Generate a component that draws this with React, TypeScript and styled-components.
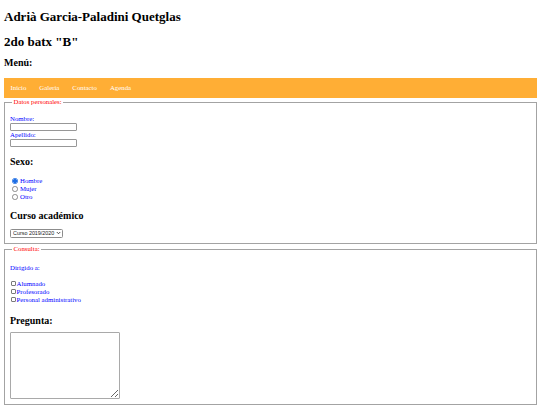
import React from "react";
import styled, { createGlobalStyle } from "styled-components";

const GlobalStyle = createGlobalStyle`
  body {
    margin: 0;
    padding: 0 3px 0 4px;
    font-family: "Liberation Serif", "Times New Roman", serif;
    font-size: 6.8px;
    color: #000;
    background: #fff;
  }
`;

const Title = styled.h1<{ $top: number }>`
  margin: ${(p) => p.$top}px 0 0;
  font-size: 13px;
  line-height: 15px;
  font-weight: bold;
`;

const Heading = styled.h2<{ $top: number }>`
  margin: ${(p) => p.$top}px 0 0;
  font-size: 10px;
  line-height: 12px;
  font-weight: bold;
`;

const NavBar = styled.ul`
  list-style: none;
  margin: 8.7px 0 0;
  padding: 0;
  display: flex;
  background: #ffae35;
`;

const NavLink = styled.a`
  display: block;
  padding: 6px 6.5px;
  line-height: 8px;
  color: #fff;
  text-decoration: none;
`;

const Fieldset = styled.fieldset<{ $top: number; $bottom: number }>`
  margin: ${(p) => p.$top}px 0 0;
  padding: 2px 5px ${(p) => p.$bottom}px;
  border: 1px solid #a3a3a3;
`;

const Legend = styled.legend`
  padding: 0 1.5px;
  margin-left: 2px;
  line-height: 8px;
  color: red;
`;

const Label = styled.label<{ $top?: number }>`
  display: block;
  margin-top: ${(p) => p.$top ?? 0}px;
  line-height: 8px;
  color: blue;
`;

const Field = styled.input`
  display: block;
  box-sizing: border-box;
  width: 67px;
  height: 8px;
  margin: 0;
  padding: 0 2px;
  border: 1px solid #979797;
  border-radius: 1px;
  font: 5.5px "Liberation Sans", Arial, sans-serif;
`;

const Choices = styled.div<{ $top: number }>`
  margin-top: ${(p) => p.$top}px;
`;

const Choice = styled.label`
  display: flex;
  align-items: center;
  height: 8px;
  color: blue;
`;

const Radio = styled.input.attrs({ type: "radio" })`
  appearance: none;
  box-sizing: border-box;
  width: 5.5px;
  height: 5.5px;
  margin: 0 2.5px 0 2px;
  border: 0.8px solid #8a8a8a;
  border-radius: 50%;
  background: #fff;

  &:checked {
    border-color: #1f6fe5;
    background: radial-gradient(circle, #1f6fe5 0 1.6px, #fff 1.9px);
  }
`;

const Check = styled.input.attrs({ type: "checkbox" })`
  appearance: none;
  box-sizing: border-box;
  width: 5px;
  height: 5px;
  margin: 0 0.5px 0 1px;
  border: 0.8px solid #7a7a7a;
  border-radius: 1px;
  background: #fff;
`;

const SelectWrap = styled.div`
  position: relative;
  width: 53px;
  margin-top: 7px;
`;

const Select = styled.select`
  appearance: none;
  display: block;
  box-sizing: border-box;
  width: 53px;
  height: 9px;
  margin: 0;
  padding: 0 0 0 2px;
  border: 1px solid #8c8c8c;
  border-radius: 1.5px;
  background: #fff;
  color: #222;
  font: 5.4px "Liberation Sans", Arial, sans-serif;
`;

// chevron drawn over the right end of the select
const Chevron = styled.svg`
  position: absolute;
  right: 2px;
  top: 2.5px;
  width: 5px;
  height: 4px;
  pointer-events: none;
`;

const TextArea = styled.textarea`
  display: block;
  box-sizing: border-box;
  width: 110px;
  height: 67px;
  margin: 5.7px 0 0;
  padding: 1px;
  border: 1px solid #a9a9a9;
  border-radius: 1px;
  font: 6px "Liberation Mono", monospace;
`;

const menu = ["Inicio", "Galeria", "Contacto", "Agenda"];

export default function App() {
  return (
    <>
      <GlobalStyle />
      <Title $top={8.8}>Adrià Garcia-Paladini Quetglas</Title>
      <Title $top={10}>2do batx "B"</Title>
      <Heading $top={8.5}>Menú:</Heading>
      <NavBar>
        {menu.map((item) => (
          <li key={item}>
            <NavLink href="#">{item}</NavLink>
          </li>
        ))}
      </NavBar>

      <form>
        <Fieldset $top={0.5} $bottom={5}>
          <Legend>Datos personales:</Legend>
          <Label htmlFor="nombre" $top={6.5}>
            Nombre:
          </Label>
          <Field id="nombre" type="text" />
          <Label htmlFor="apellido">Apellido:</Label>
          <Field id="apellido" type="text" />

          <Heading $top={9.4}>Sexo:</Heading>
          <Choices $top={8.4}>
            <Choice>
              <Radio name="sexo" defaultChecked />
              Hombre
            </Choice>
            <Choice>
              <Radio name="sexo" />
              Mujer
            </Choice>
            <Choice>
              <Radio name="sexo" />
              Otro
            </Choice>
          </Choices>

          <Heading $top={9}>Curso académico</Heading>
          <SelectWrap>
            <Select defaultValue="2019">
              <option value="2019">Curso 2019/2020</option>
              <option value="2020">Curso 2020/2021</option>
            </Select>
            <Chevron viewBox="0 0 10 8">
              <path d="M1.5 2 L5 5.5 L8.5 2" fill="none" stroke="#222" strokeWidth="1.6" />
            </Chevron>
          </SelectWrap>
        </Fieldset>

        <Fieldset $top={1.5} $bottom={4.5}>
          <Legend>Consulta:</Legend>
          <Label $top={9}>Dirigido a:</Label>
          <Choices $top={7.6}>
            <Choice>
              <Check />
              Alumnado
            </Choice>
            <Choice>
              <Check />
              Profesorado
            </Choice>
            <Choice>
              <Check />
              Personal administrativo
            </Choice>
          </Choices>

          <Heading $top={10.7}>Pregunta:</Heading>
          <TextArea />
        </Fieldset>
      </form>
    </>
  );
}
